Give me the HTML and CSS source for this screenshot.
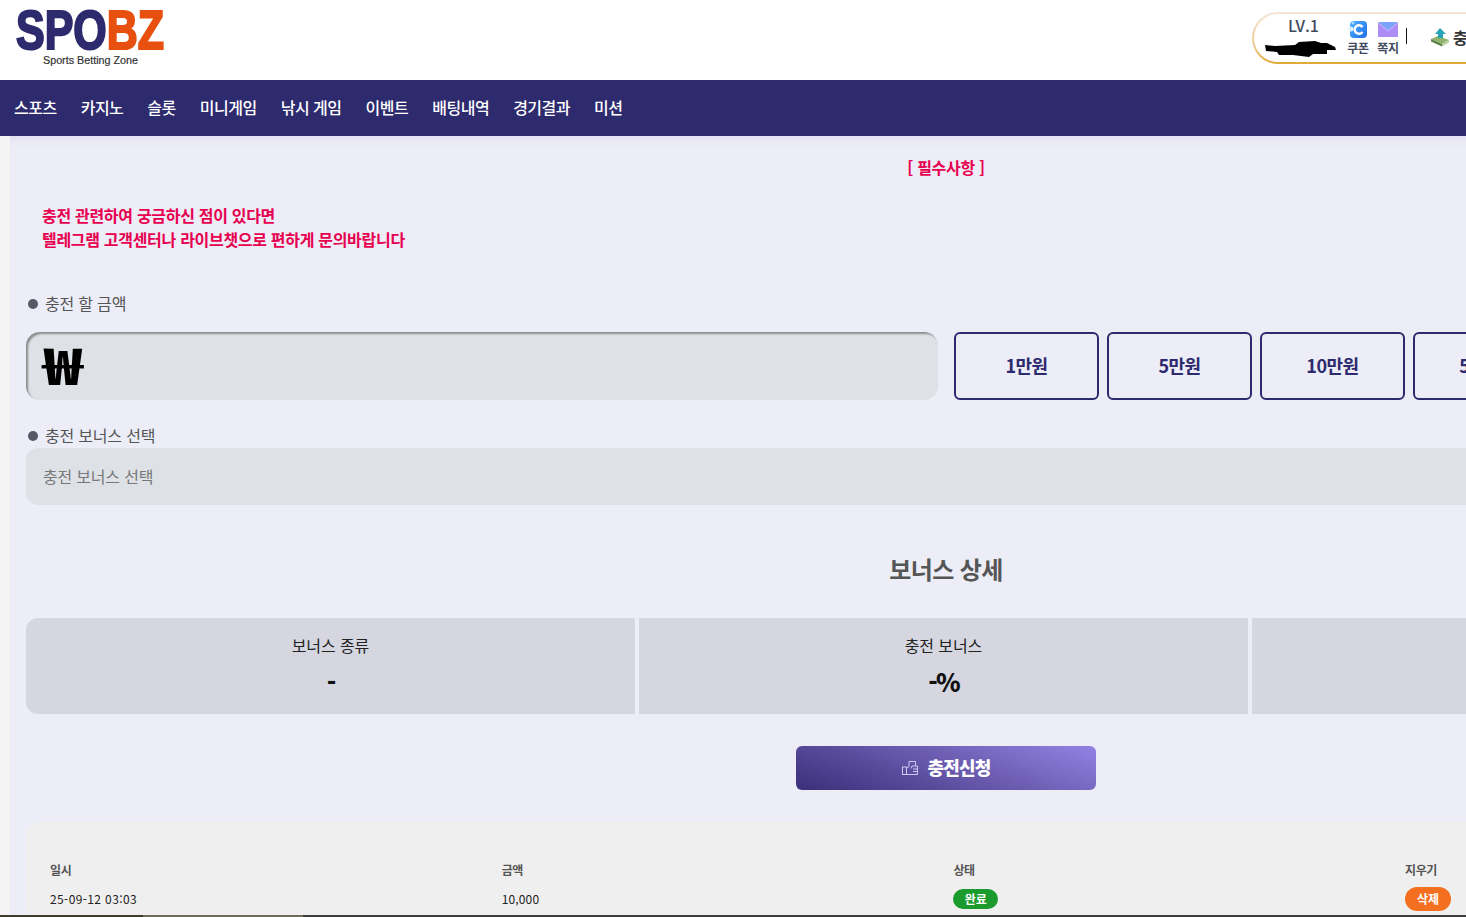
FILE: index.html
```html
<!DOCTYPE html>
<html lang="ko">
<head>
<meta charset="utf-8">
<title>SPOBZ</title>
<link rel="stylesheet" href="styles.css">
</head>
<body>
<div class="page">
  <header class="top">
    <a class="logo">
      <svg width="152" height="58" viewBox="0 0 152 58">
        <text class="logo-main" x="1" y="41" textLength="148" lengthAdjust="spacingAndGlyphs"><tspan class="logo-spo">SPO</tspan><tspan class="logo-bz">BZ</tspan></text>
        <text class="logo-sub" x="28" y="56" textLength="95" lengthAdjust="spacingAndGlyphs">Sports Betting Zone</text>
      </svg>
    </a>
    <div class="userbox">
      <div class="user">
        <div class="level">LV.1</div>
        <svg class="scribble" width="72" height="18" viewBox="0 0 72 18">
          <path d="M0 5 L10 6 L30 5 L34 2 L50 1 L56 3 L62 3 L70 7 L71 10 L62 10 L62 14 L48 14 L44 17 L28 15 L14 15 L12 12 L1 11 Z" fill="#000"/>
        </svg>
      </div>
      <div class="quick">
        <svg width="20" height="20" viewBox="0 0 20 20">
          <defs><linearGradient id="cp" x1="0" y1="0" x2="1" y2="1"><stop offset="0" stop-color="#4fb0ff"/><stop offset="1" stop-color="#1f6fe8"/></linearGradient></defs>
          <rect x="2" y="1" width="17" height="17" rx="4" fill="url(#cp)"/>
          <circle cx="3" cy="9" r="2.500" fill="#ddf0ff"/>
          <circle cx="5" cy="3" r="1.500" fill="#a6dcff"/>
          <path d="M14.500 7a4.300 4.300 0 1 0 0 5" fill="none" stroke="#fff" stroke-width="2.400"/>
        </svg>
        <span>쿠폰</span>
      </div>
      <div class="quick">
        <svg width="20" height="20" viewBox="0 0 20 20">
          <rect x="0" y="2" width="20" height="15" fill="#ad8df5"/>
          <path d="M0 2 L10 11.500 L20 2 Z" fill="#78a5fa"/>
          <path d="M0 2 L10 10 L20 2 L20 3.500 L10 11.500 L0 3.500 Z" fill="#c4adf9"/>
        </svg>
        <span>쪽지</span>
      </div>
      <i class="sep"></i>
      <div class="charge">
        <svg width="20" height="20" viewBox="0 0 20 20">
          <path d="M1 12 L8 9 L19 13 L12 17 Z" fill="#8fb36f"/>
          <path d="M1 12 L12 17 L12 19.500 L1 14.500 Z" fill="#5b7f45"/>
          <path d="M12 17 L19 13 L19 15.500 L12 19.500 Z" fill="#b9cfa0"/>
          <path d="M10 1 L16 7 L13 7 L13 11 L8 11 L8 7 L5 7 Z" fill="#28a3b8"/>
        </svg>
        <span>충전</span>
      </div>
    </div>
  </header>

  <nav class="nav">
    <a>스포츠</a><a>카지노</a><a>슬롯</a><a>미니게임</a><a>낚시 게임</a><a>이벤트</a><a>배팅내역</a><a>경기결과</a><a>미션</a>
  </nav>

  <main class="main">
    <h2 class="must">[ 필수사항 ]</h2>
    <p class="notice">충전 관련하여 궁금하신 점이 있다면<br>텔레그램 고객센터나 라이브챗으로 편하게 문의바랍니다</p>

    <div class="label label-amount"><i class="dot"></i>충전 할 금액</div>
    <div class="amount-row">
      <div class="amount-input"><span class="won">₩</span></div>
      <button class="amt">1만원</button>
      <button class="amt">5만원</button>
      <button class="amt">10만원</button>
      <button class="amt">50만원</button>
    </div>

    <div class="label label-bonus"><i class="dot"></i>충전 보너스 선택</div>
    <div class="select">충전 보너스 선택</div>

    <h3 class="detail-title">보너스 상세</h3>
    <div class="cards">
      <div class="card"><div class="card-label">보너스 종류</div><div class="card-value">-</div></div>
      <div class="card"><div class="card-label">충전 보너스</div><div class="card-value">-%</div></div>
      <div class="card"></div>
    </div>

    <div class="submit-wrap">
      <button class="submit">
        <svg width="18" height="16" viewBox="0 0 18 16" fill="none" stroke="#cfc9ee" stroke-width="1">
          <rect x="1.500" y="7" width="4" height="7.500"/>
          <path d="M5.500 8 L8 6.500 L8 1.500 L14.500 1.500 L14.500 6"/>
          <path d="M5.500 14.500 L16.500 14.500 L16.500 6 L11 6 L10 8.500"/>
          <path d="M12 9 L16.500 9 M12 11.500 L16.500 11.500"/>
        </svg>
        <span class="submit-text">충전신청</span>
      </button>
    </div>

    <section class="history">
      <div class="cell head">일시</div>
      <div class="cell head">금액</div>
      <div class="cell head">상태</div>
      <div class="cell head">지우기</div>
      <div class="cell date">25-09-12 03:03</div>
      <div class="cell money">10,000</div>
      <div class="cell"><span class="badge done">완료</span></div>
      <div class="cell"><span class="badge del">삭제</span></div>
    </section>
  </main>
</div>
<div class="taskbar"><i class="tb-a"></i><i class="tb-b"></i><i class="tb-c"></i></div>
</body>
</html>
```
FILE: styles.css
```css
* { box-sizing: border-box; }
html, body { margin: 0; height: 917px; overflow: hidden; }
body {
  font-family: "Noto Sans CJK KR", "Noto Sans", sans-serif;
  background: #f4f4f4;
  color: #222;
  position: relative;
}
.page { width: 1882px; }

.top {
  height: 80px;
  background: #fff;
  display: flex;
  align-items: flex-start;
  justify-content: space-between;
  padding: 8px 0 0 15px;
}
.logo { display: block; height: 58px; }
.logo svg { display: block; }
.logo-main { font: 700 56px "Liberation Sans", sans-serif; stroke-width: 2.2px; }
.logo-spo { fill: #2d2a6e; stroke: #2d2a6e; }
.logo-bz { fill: #e8500f; stroke: #e8500f; }
.logo-sub { font: 400 11px "Liberation Sans", sans-serif; fill: #333; stroke: #333; stroke-width: 0.2px; }

.userbox {
  width: 630px;
  height: 52px;
  margin: 4px 0 0 0;
  border: 2px solid transparent;
  border-radius: 26px 0 0 26px;
  background:
    linear-gradient(#fff, #fff) padding-box,
    linear-gradient(180deg, #f5e4da 0%, #e8c98a 70%, #e0aa35 100%) border-box;
  display: flex;
  align-items: flex-start;
  padding-left: 11px;
  position: relative;
}
.user { width: 73px; margin-left: 2px; display: flex; flex-direction: column; align-items: center; }
.level { font-size: 16px; font-weight: 500; line-height: 22px; color: #3f4a5c; }
.scribble { display: block; margin: 4px 0 0 -2px; align-self: flex-start; }
.quick { width: 30px; display: flex; flex-direction: column; align-items: center; padding-top: 6px; }
.user + .quick { margin-left: 3px; }
.quick svg { display: block; }
.quick span { font-size: 12px; font-weight: 700; line-height: 14px; color: #3f4a5c; white-space: nowrap; margin-top: 1px; letter-spacing: -0.2px; }
.sep { width: 1px; height: 16px; background: #111; margin: 14px 0 0 3px; }
.charge { display: flex; align-items: center; gap: 3px; margin: 13px 0 0 23px; }
.charge svg { display: block; }
.charge span { font-size: 16px; font-weight: 700; line-height: 20px; color: #333; }

.nav {
  height: 56px;
  background: #2d2a6e;
  display: flex;
  align-items: center;
  gap: 24px;
  padding: 0 0 2px 14px;
}
.nav a { color: #fff; font-size: 16px; font-weight: 500; letter-spacing: -0.5px; white-space: nowrap; }

.main {
  margin-left: 10px;
  background: #ecedf7;
  padding: 0 16px;
  height: 781px;
  overflow: hidden;
  box-shadow: inset 0 10px 10px -8px #e0daf2;
}
.must {
  margin: 0;
  padding-top: 19px;
  height: 43px;
  font-size: 16px;
  line-height: 24px;
  font-weight: 700;
  color: #e6004f;
  text-align: center;
  letter-spacing: -0.3px;
}
.notice {
  margin: 24px 0 0 16px;
  font-size: 16px;
  line-height: 24px;
  font-weight: 700;
  color: #e6004f;
  letter-spacing: -0.3px;
}
.label { display: flex; align-items: center; font-size: 16px; line-height: 24px; color: #555; letter-spacing: -0.2px; }
.label-amount { margin: 40px 0 0 2px; }
.label-bonus { margin: 23px 0 0 2px; }
.dot { width: 10px; height: 10px; border-radius: 50%; background: #555a66; margin-right: 7px; position: relative; top: 1px; }

.amount-row { display: flex; gap: 8px; margin-top: 17px; }
.amount-input {
  width: 912px;
  height: 68px;
  margin-right: 8px;
  background: #dee1e6;
  border-radius: 14px;
  box-shadow: inset 2px 2px 2px #8d8d8d;
  padding-left: 17px;
}
.won {
  display: inline-block;
  font-size: 50px;
  line-height: 62px;
  font-weight: 900;
  color: #000;
  transform: scaleX(1.3);
  transform-origin: left center;
}
.amt {
  width: 145px;
  height: 68px;
  flex: none;
  background: transparent;
  border: 2px solid #2d2a6e;
  border-radius: 6px;
  font: 700 18px "Noto Sans CJK KR", sans-serif;
  letter-spacing: -0.5px;
  color: #2d2a6e;
  padding: 0 0 3px;
}
.select {
  height: 57px;
  margin-top: 1px;
  background: #dee1e6;
  border-radius: 12px;
  font-size: 16px;
  line-height: 57px;
  color: #777;
  padding-left: 17px;
  letter-spacing: -0.2px;
}
.detail-title {
  margin: 44px 0 0;
  height: 40px;
  font-size: 24px;
  line-height: 40px;
  font-weight: 700;
  color: #555;
  text-align: center;
  letter-spacing: -0.6px;
}
.cards {
  display: grid;
  grid-template-columns: repeat(3, 609px);
  gap: 4px;
  margin-top: 29px;
  border-radius: 12px;
  overflow: hidden;
}
.card { height: 96px; background: #d5d6e0; text-align: center; padding-top: 15px; }
.card-label { font-size: 16px; line-height: 24px; color: #222; letter-spacing: -0.1px; }
.card-value { font-size: 25px; line-height: 36px; font-weight: 900; color: #111; margin-top: 6px; letter-spacing: -2px; }

.submit-wrap { display: flex; justify-content: center; margin-top: 32px; }
.submit {
  width: 300px;
  height: 44px;
  border: 0;
  border-radius: 6px;
  background: linear-gradient(20deg, #3a2f7a 0%, #6b5cb0 55%, #9282e4 100%);
  display: flex;
  align-items: center;
  justify-content: center;
  gap: 8px;
  color: #fff;
  font: 900 18px "Noto Sans CJK KR", sans-serif;
  letter-spacing: -0.8px;
  padding: 0;
}
.submit svg { display: block; }
.submit-text { position: relative; top: -1px; }

.history {
  margin-top: 32px;
  height: 120px;
  background: #efefef;
  border-radius: 14px;
  display: grid;
  grid-template-columns: repeat(4, 451.7px);
  grid-auto-rows: 29px;
  padding: 33px 0 0 24px;
  align-items: center;
}
.cell { font-size: 12px; color: #222; line-height: 18px; }
.date { letter-spacing: 0.38px; }
.money { letter-spacing: 0.15px; }
.head { font-weight: 700; color: #555; letter-spacing: -0.4px; }
.badge {
  display: inline-flex;
  align-items: center;
  justify-content: center;
  border-radius: 12px;
  color: #fff;
  font-weight: 700;
  font-size: 12px;
  vertical-align: middle;
}
.done { width: 45px; height: 20px; background: #1b9b2e; }
.del { width: 46px; height: 24px; background: #f47020; }

.taskbar { position: absolute; left: 0; right: 0; bottom: 0; height: 2px; display: flex; }
.tb-a { width: 143px; background: #3d3c2e; }
.tb-b { width: 160px; background: #6d6b5c; }
.tb-c { flex: 1; background: #3d3d3d; }
```
